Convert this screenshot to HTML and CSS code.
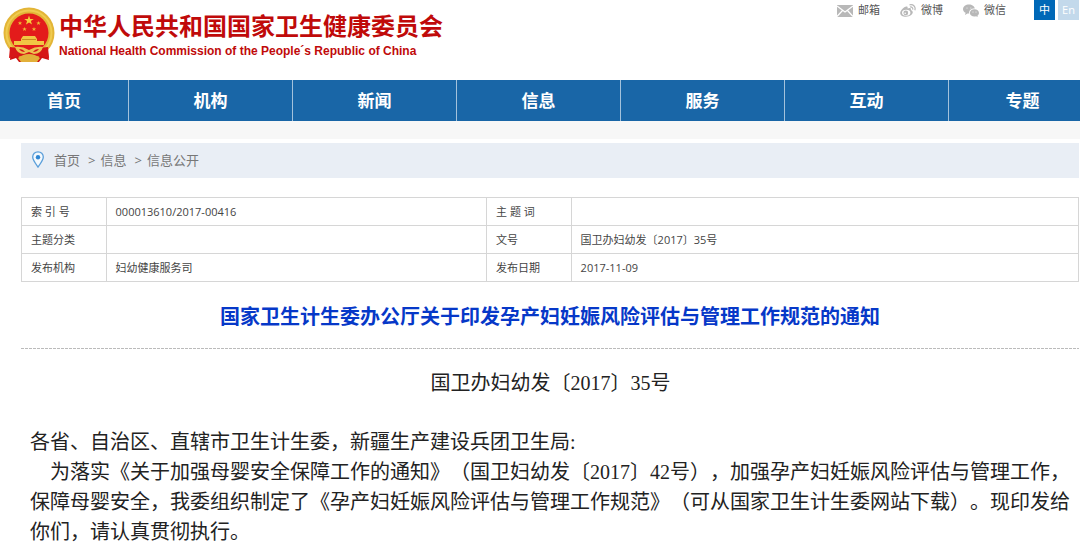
FILE: index.html
```html
<!DOCTYPE html>
<html lang="zh-CN">
<head>
  <meta charset="UTF-8">
  <meta name="viewport" content="width=device-width, initial-scale=1.0">
  <title>国家卫生计生委办公厅关于印发孕产妇妊娠风险评估与管理工作规范的通知</title>
  <link rel="stylesheet" href="styles.css">
</head>
<body>

<!-- Header -->
<header class="header">
  <a class="logo" href="#">
    <svg class="emblem" viewBox="0 0 52 56" aria-hidden="true">
      <path d="M8 38 L7 53 L13 51 L16 55 H36 L39 51 L46 53 L44 38 Z" fill="#cf1313"/>
      <ellipse cx="26" cy="26" rx="25.500" ry="25.500" fill="#e3b537"/>
      <circle cx="26" cy="26" r="22.500" fill="none" stroke="#efcb50" stroke-width="2"/>
      <circle cx="26" cy="26" r="19.500" fill="#e31b1b"/>
      <path d="M26 8.500 l1.200 3.400 h3.600 l-2.900 2.200 1.100 3.500 -3 -2.100 -3 2.100 1.100 -3.500 -2.900 -2.200 h3.600 Z" fill="#f6cf3c"/>
      <g fill="#f0b936">
        <path d="M17 14 l.6 1.500 h1.600 l-1.300 1 .5 1.500 -1.400 -.9 -1.400 .9 .5 -1.500 -1.300 -1 h1.600 Z"/>
        <path d="M35.500 14 l.6 1.500 h1.600 l-1.300 1 .5 1.500 -1.400 -.9 -1.400 .9 .5 -1.500 -1.300 -1 h1.600 Z"/>
        <path d="M21.500 20 l.6 1.500 h1.600 l-1.300 1 .5 1.500 -1.400 -.9 -1.400 .9 .5 -1.500 -1.300 -1 h1.600 Z"/>
        <path d="M31 20 l.6 1.500 h1.600 l-1.300 1 .5 1.500 -1.400 -.9 -1.400 .9 .5 -1.500 -1.300 -1 h1.600 Z"/>
      </g>
      <path d="M20 29 h12 l2 3 v2 h7 v4 H11 v-4 h7 v-2 Z" fill="#f1c644"/>
      <path d="M19 32.500 h14" stroke="#c98d20" stroke-width="1"/>
      <path d="M7 40 Q16 41 26 42 Q36 41 45 40 L46 51 L35 49 L26 53 L17 49 L6 51 Z" fill="#d61717"/>
      <path d="M12 40 Q19 39 26 43 Q33 39 40 40 Q38 47 31 47 L26 45 L21 47 Q14 47 12 40 Z" fill="#edc050"/>
      <path d="M16 42 Q20 42 22 45 Q18 45 16 42 Z M36 42 Q32 42 30 45 Q34 45 36 42 Z" fill="#d61717"/>
      <path d="M15 51 Q20 47 26 47 Q32 47 37 51 L34 55 H18 Z" fill="#e2b03a"/>
    </svg>
    <span class="logo-text">
      <span class="logo-cn">中华人民共和国国家卫生健康委员会</span>
      <span class="logo-en">National Health Commission of the People´s Republic of China</span>
    </span>
  </a>

  <div class="top-links">
    <a href="#">
      <svg viewBox="0 0 16 13" aria-hidden="true">
        <rect x="0" y="1" width="16" height="12" fill="#b8b8b8"/>
        <path d="M0 2 L8 8 L16 2 M0 12.500 L5.500 6.500 M16 12.500 L10.500 6.500" fill="none" stroke="#fff" stroke-width="1.200"/>
      </svg>
      邮箱
    </a>
    <a href="#">
      <svg viewBox="0 0 16 13" aria-hidden="true">
        <path d="M5.500 2.800 C7.500 2 8 3.300 7.500 4.600 C9.700 3.500 11.600 4 10.800 6 C15 7.600 12 12.800 6 12.800 C1.500 12.800 -1 10 .8 7 C2 5 4 3.300 5.500 2.800 Z" fill="#b8b8b8"/>
        <ellipse cx="6.200" cy="8.800" rx="4.200" ry="3" fill="#fff"/>
        <circle cx="5.800" cy="8.900" r="2.400" fill="#b8b8b8"/>
        <circle cx="5.200" cy="9.200" r=".8" fill="#fff"/>
        <path d="M9.500 .9 C13.500 0 16 3 14.800 6.300 M10 3 C12 2.600 13.200 4 12.600 5.600" fill="none" stroke="#b8b8b8" stroke-width="1.200"/>
      </svg>
      微博
    </a>
    <a href="#">
      <svg viewBox="0 0 16 13" aria-hidden="true">
        <path d="M6 .5 C9 .5 11.600 2.300 11.800 4.600 C8 4.300 5.500 7 6.300 9.600 L4.500 9.500 L2 11 L2.600 8.800 C1 8 0 6.600 0 5.200 C0 2.600 2.700 .5 6 .5 Z" fill="#b8b8b8"/>
        <path d="M11.400 5.200 C14 5.200 16 6.900 16 8.900 C16 10.100 15.300 11 14.400 11.700 L14.800 13 L13 12.300 C10 13.200 6.900 11.500 6.900 8.900 C6.900 6.900 8.900 5.200 11.400 5.200 Z" fill="#b8b8b8"/>
        <circle cx="4" cy="4" r=".5" fill="#fff"/>
        <circle cx="7.900" cy="4" r=".5" fill="#fff"/>
        <circle cx="10" cy="8" r=".5" fill="#fff"/>
        <circle cx="13" cy="8" r=".5" fill="#fff"/>
      </svg>
      微信
    </a>
    <div class="lang">
      <a class="active" href="#">中</a>
      <a href="#">En</a>
    </div>
  </div>
</header>

<!-- Main menu -->
<nav class="menu">
  <a href="#">首页</a>
  <a href="#">机构</a>
  <a href="#">新闻</a>
  <a href="#">信息</a>
  <a href="#">服务</a>
  <a href="#">互动</a>
  <a href="#">专题</a>
</nav>

<main class="content">
  <div class="breadcrumb">
    <svg viewBox="0 0 12 17" aria-hidden="true">
      <path d="M6 .8 C9 .8 11.300 3 11.300 6 C11.300 9 8.500 12.500 6 16 C3.500 12.500 .7 9 .7 6 C.7 3 3 .8 6 .8 Z" fill="#f4f9fd" stroke="#5b9fda" stroke-width="1.300"/>
      <circle cx="6" cy="6.300" r="2.200" fill="#2f86d2"/>
    </svg>
    <a href="#">首页</a>
    <span>&gt;</span>
    <a href="#">信息</a>
    <span>&gt;</span>
    <a href="#">信息公开</a>
  </div>

  <table class="info">
    <colgroup>
      <col class="col-label">
      <col class="col-left">
      <col class="col-label">
      <col>
    </colgroup>
    <tr>
      <th scope="row">索 引 号</th>
      <td>000013610/2017-00416</td>
      <th scope="row">主 题 词</th>
      <td></td>
    </tr>
    <tr>
      <th scope="row">主题分类</th>
      <td></td>
      <th scope="row">文号</th>
      <td>国卫办妇幼发〔2017〕35号</td>
    </tr>
    <tr>
      <th scope="row">发布机构</th>
      <td>妇幼健康服务司</td>
      <th scope="row">发布日期</th>
      <td>2017-11-09</td>
    </tr>
  </table>

  <h1 class="title">国家卫生计生委办公厅关于印发孕产妇妊娠风险评估与管理工作规范的通知</h1>

  <article class="article">
    <p class="doc-number">国卫办妇幼发〔2017〕35号</p>
    <p>各省、自治区、直辖市卫生计生委，新疆生产建设兵团卫生局:</p>
    <p class="indent">为落实《关于加强母婴安全保障工作的通知》（国卫妇幼发〔2017〕42号），加强孕产妇妊娠风险评估与管理工作，保障母婴安全，我委组织制定了《孕产妇妊娠风险评估与管理工作规范》（可从国家卫生计生委网站下载）。现印发给你们，请认真贯彻执行。</p>
  </article>
</main>

</body>
</html>
```

FILE: styles.css
```css
* {
  box-sizing: border-box;
}

body {
  margin: 0;
  background-color: #fff;
  font-family: "Open Sans", "Noto Sans CJK SC", sans-serif;
  color: #444;
}

a {
  color: inherit;
  text-decoration: none;
}

/* Header */
.header {
  display: flex;
  justify-content: space-between;
  align-items: flex-start;
  height: 80px;
}

.logo {
  display: flex;
  gap: 4px;
  padding: 7px 0 0 3px;
  color: #c00a0a;
}

.emblem {
  width: 52px;
  height: 56px;
}

.logo-text {
  display: flex;
  flex-direction: column;
  padding-top: 3px;
}

.logo-cn {
  font-size: 24px;
  line-height: 32px;
  font-weight: bold;
}

.logo-en {
  font-family: "Liberation Sans", Arial, sans-serif;
  font-size: 12px;
  line-height: 18px;
  font-weight: bold;
}

.top-links {
  display: flex;
  gap: 20px;
  padding-right: 1px;
  font-size: 11px;
  line-height: 20px;
  color: #555;
}

.top-links > a {
  display: flex;
  align-items: center;
  gap: 5px;
}

.top-links svg {
  width: 16px;
  height: 13px;
}

.lang {
  display: flex;
  gap: 3px;
  margin-left: 8px;
  color: #fff;
}

.lang a {
  width: 21px;
  text-align: center;
  background-color: #c3d9eb;
}

.lang a.active {
  background-color: #0068b7;
}

/* Main menu */
.menu {
  display: grid;
  grid-template-columns: 128fr repeat(5, 164fr) 132fr;
  border-bottom: 18px solid #f7f7f7;
}

.menu a {
  background-color: #1966a7;
  color: #fff;
  font-size: 17px;
  font-weight: bold;
  line-height: 41px;
  text-align: center;
}

.menu a + a {
  border-left: 1px solid #a3c2dc;
}

.menu a:last-child {
  padding-left: 16px;
}

/* Page content */
.content {
  padding: 4px 1px 0 21px;
}

.breadcrumb {
  display: flex;
  align-items: center;
  gap: 5px;
  height: 35px;
  padding: 0 11px 2px;
  background-color: #e9eef5;
  font-size: 13px;
  color: #777;
}

.breadcrumb svg {
  width: 12px;
  height: 17px;
  margin-right: 5px;
}

.breadcrumb span {
  margin-left: 3px;
}

/* Document details */
.info {
  width: 100%;
  margin-top: 19px;
  border-collapse: collapse;
  table-layout: fixed;
  font-size: 11px;
  line-height: 16px;
}

.info th,
.info td {
  padding: 6px 9px 5px;
  border: 1px solid #d6d6d6;
  font-weight: normal;
  text-align: left;
}

.col-label {
  width: 8%;
}

.col-left {
  width: 36%;
}

.title {
  margin: 0;
  padding: 20px 0 17px;
  /* short grey dashes under the heading */
  background: repeating-linear-gradient(to right, #bbb 0 3px, #fff 3px 4px) bottom / 100% 1px no-repeat;
  color: #0638c8;
  font-size: 20px;
  line-height: 30px;
  text-align: center;
}

/* Notice text */
.article {
  padding: 19px 8px 0 9px;
  color: #222;
  font-family: "Liberation Serif", "Noto Sans CJK SC", serif;
  font-size: 20px;
  line-height: 30px;
  text-spacing-trim: space-all;
}

.article p {
  margin: 0;
}

.article .doc-number {
  margin-bottom: 29px;
  text-align: center;
}

.article .indent {
  text-indent: 20px;
}
```
